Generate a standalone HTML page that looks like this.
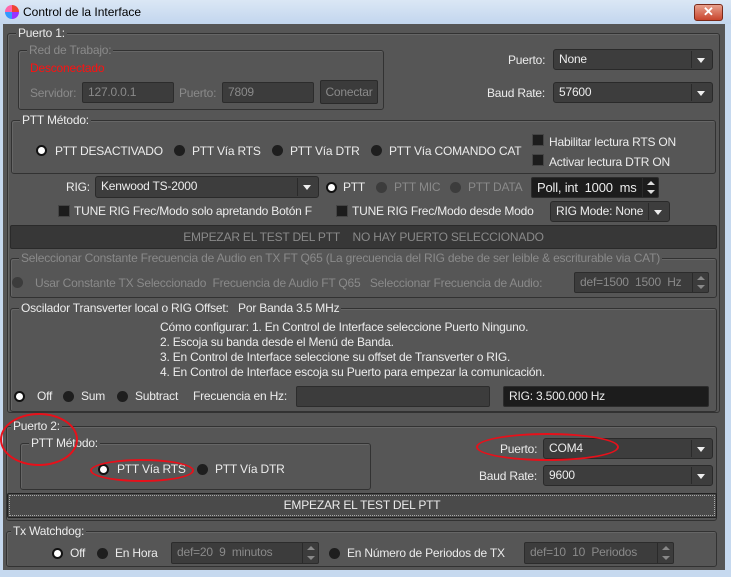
<!DOCTYPE html>
<html><head><meta charset="utf-8"><style>
*{box-sizing:border-box;margin:0;padding:0}
body{width:731px;height:577px;overflow:hidden;background:#c6d9ef;font-family:"Liberation Sans",Arial,sans-serif;font-size:12px;color:#ececec;position:relative;letter-spacing:-0.2px}
.a{position:absolute;white-space:nowrap}
.win{position:absolute;left:3px;top:24px;width:722px;height:546px;background:#565656}
.title{position:absolute;left:0;top:0;width:731px;height:24px;background:linear-gradient(#dbe7f5,#c3d6ee);color:#000;font-size:12px;letter-spacing:0}
.grp{position:absolute;border:1px solid #323232;border-radius:3px;box-shadow:inset 1px 1px 0 #666}
.lbl{position:absolute;top:-8px;left:8px;background:#565656;padding:0 2px;line-height:14px}
.dis{color:#8a8a8a}
.in{position:absolute;background:#3c3c3c;border:1px solid #2c2c2c;border-radius:2px;padding-left:5px;line-height:19px;color:#ececec}
.cb{position:absolute;background:#3d3d3d;border:1px solid #2a2a2a;border-radius:3px;padding-left:5px;line-height:19px}
.cb:after{content:"";position:absolute;right:7px;top:8px;border:4px solid transparent;border-top:5px solid #eee;border-bottom:0}
.cb:before{content:"";position:absolute;right:20px;top:1px;bottom:1px;border-left:1px solid #2a2a2a}
.r{position:absolute;width:11px;height:11px;border-radius:50%;background:#1e1e1e}
.r.on{background:#fff;border:2.5px solid #111}
.r.d{background:#3c3c3c}
.ck{position:absolute;width:12px;height:12px;background:#1c1c1c;border:1px solid #444}
.btn{position:absolute;background:#3b3b3b;border:1px solid #2a2a2a;border-radius:2px;text-align:center}
.sp{position:absolute;border-left:1px solid #2a2a2a;right:0;top:0;bottom:0;width:16px}
.sp:before{content:"";position:absolute;left:4px;top:3px;border:4px solid transparent;border-bottom:4px solid #888;border-top:0}
.sp:after{content:"";position:absolute;left:4px;bottom:3px;border:4px solid transparent;border-top:4px solid #888;border-bottom:0}
.sp.w:before{border-bottom-color:#ddd}.sp.w:after{border-top-color:#ddd}
.ell{position:absolute;border:2px solid #e8101a;border-radius:50%}
</style></head><body>
<div class="title">
<div class="a" style="left:5px;top:5px;width:14px;height:14px;border-radius:50%;background:conic-gradient(#e43 0 25%,#93f 0 50%,#39f 0 75%,#f6a 0)"></div>
<div class="a" style="left:23px;top:5px">Control de la Interface</div>
<div class="a" style="left:694px;top:4px;width:29px;height:17px;background:linear-gradient(#e8a08c,#c8452d);border:1px solid #7a2a1a;border-radius:3px;color:#fff;font-weight:bold;text-align:center;line-height:14px;font-size:13px">✕</div>
</div>
<div class="win"></div>

<div class="grp" style="left:7px;top:33px;width:713px;height:380px"><div class="lbl">Puerto 1:</div></div>
<div class="grp" style="left:18px;top:50px;width:366px;height:60px"><div class="lbl dis">Red de Trabajo:</div></div>
<div class="a" style="left:30px;top:61px;color:#ff1010">Desconectado</div>
<div class="a dis" style="left:30px;top:86px">Servidor:</div>
<div class="in dis" style="left:82px;top:82px;width:92px;height:21px;color:#8a8a8a">127.0.0.1</div>
<div class="a dis" style="left:179px;top:86px">Puerto:</div>
<div class="in" style="left:222px;top:82px;width:92px;height:21px;color:#8a8a8a">7809</div>
<div class="btn dis" style="left:320px;top:80px;width:58px;height:24px;line-height:22px">Conectar</div>

<div class="a" style="left:508px;top:53px">Puerto:</div>
<div class="cb" style="left:553px;top:49px;width:160px;height:21px">None</div>
<div class="a" style="left:487px;top:86px">Baud Rate:</div>
<div class="cb" style="left:553px;top:82px;width:160px;height:21px">57600</div>

<div class="grp" style="left:11px;top:120px;width:705px;height:54px"><div class="lbl">PTT Método:</div></div>
<div class="r on" style="left:36px;top:145px"></div><div class="a" style="left:55px;top:144px">PTT DESACTIVADO</div>
<div class="r" style="left:174px;top:145px"></div><div class="a" style="left:192px;top:144px">PTT Vía RTS</div>
<div class="r" style="left:272px;top:145px"></div><div class="a" style="left:290px;top:144px">PTT Vía DTR</div>
<div class="r" style="left:371px;top:145px"></div><div class="a" style="left:389px;top:144px">PTT Vía COMANDO CAT</div>
<div class="ck" style="left:532px;top:134px"></div><div class="a" style="left:549px;top:135px">Habilitar lectura RTS ON</div>
<div class="ck" style="left:532px;top:154px"></div><div class="a" style="left:549px;top:155px">Activar lectura DTR ON</div>

<div class="a" style="left:66px;top:180px">RIG:</div>
<div class="cb" style="left:95px;top:176px;width:224px;height:22px">Kenwood TS-2000</div>
<div class="r on" style="left:326px;top:182px"></div><div class="a" style="left:343px;top:180px">PTT</div>
<div class="r d" style="left:376px;top:182px"></div><div class="a dis" style="left:394px;top:180px">PTT MIC</div>
<div class="r d" style="left:450px;top:182px"></div><div class="a dis" style="left:468px;top:180px">PTT DATA</div>
<div class="in" style="left:531px;top:177px;width:128px;height:21px;background:#1c1c1c;font-size:13px">Poll, int&nbsp; 1000&nbsp; ms<div class="sp w"></div></div>

<div class="ck" style="left:58px;top:205px"></div><div class="a" style="left:74px;top:204px">TUNE RIG Frec/Modo solo apretando Botón F</div>
<div class="ck" style="left:336px;top:205px"></div><div class="a" style="left:352px;top:204px">TUNE RIG Frec/Modo desde Modo</div>
<div class="cb" style="left:550px;top:201px;width:120px;height:21px">RIG Mode: None</div>

<div class="btn" style="left:10px;top:225px;width:707px;height:24px;line-height:23px;color:#8a8a8a;background:#373737">EMPEZAR EL TEST DEL PTT&nbsp;&nbsp;&nbsp; NO HAY PUERTO SELECCIONADO</div>

<div class="grp" style="left:10px;top:258px;width:707px;height:40px"><div class="lbl dis">Seleccionar Constante Frecuencia de Audio en TX FT Q65 (La grecuencia del RIG debe de ser leible &amp; escriturable via CAT)</div></div>
<div class="r d" style="left:12px;top:277px"></div><div class="a dis" style="left:35px;top:276px">Usar Constante TX Seleccionado&nbsp; Frecuencia de Audio FT Q65&nbsp;&nbsp; Seleccionar Frecuencia de Audio:</div>
<div class="in" style="left:574px;top:272px;width:135px;height:21px;color:#8a8a8a">def=1500&nbsp; 1500&nbsp; Hz<div class="sp"></div></div>

<div class="grp" style="left:10px;top:308px;width:707px;height:104px"><div class="lbl">Oscilador Transverter local o RIG Offset:&nbsp;&nbsp; Por Banda 3.5 MHz</div></div>
<div class="a" style="left:160px;top:320px;line-height:15px">Cómo configurar: 1. En Control de Interface seleccione Puerto Ninguno.<br>2. Escoja su banda desde el Menú de Banda.<br>3. En Control de Interface seleccione su offset de Transverter o RIG.<br>4. En Control de Interface escoja su Puerto para empezar la comunicación.</div>
<div class="r on" style="left:14px;top:391px"></div><div class="a" style="left:37px;top:389px">Off</div>
<div class="r" style="left:63px;top:391px"></div><div class="a" style="left:81px;top:389px">Sum</div>
<div class="r" style="left:117px;top:391px"></div><div class="a" style="left:135px;top:389px">Subtract</div>
<div class="a" style="left:193px;top:389px">Frecuencia en Hz:</div>
<div class="in" style="left:296px;top:386px;width:194px;height:21px"></div>
<div class="in" style="left:503px;top:386px;width:206px;height:21px;background:#1c1c1c">RIG: 3.500.000 Hz</div>

<div class="grp" style="left:6px;top:426px;width:711px;height:95px"><div class="lbl" style="left:4px">Puerto 2:</div></div>
<div class="grp" style="left:20px;top:443px;width:351px;height:47px"><div class="lbl">PTT Método:</div></div>
<div class="r on" style="left:98px;top:464px"></div><div class="a" style="left:117px;top:462px">PTT Vía RTS</div>
<div class="r" style="left:197px;top:464px"></div><div class="a" style="left:215px;top:462px">PTT Vía DTR</div>
<div class="a" style="left:500px;top:442px">Puerto:</div>
<div class="cb" style="left:543px;top:438px;width:170px;height:21px">COM4</div>
<div class="a" style="left:479px;top:469px">Baud Rate:</div>
<div class="cb" style="left:543px;top:465px;width:170px;height:21px">9600</div>
<div class="btn" style="left:7px;top:493px;width:710px;height:25px;line-height:23px;background:#4a4a4a;border-color:#222;outline:1px dotted #aaa;outline-offset:-3px">EMPEZAR EL TEST DEL PTT</div>

<div class="grp" style="left:6px;top:531px;width:711px;height:36px"><div class="lbl" style="left:4px">Tx Watchdog:</div></div>
<div class="r on" style="left:52px;top:548px"></div><div class="a" style="left:70px;top:546px">Off</div>
<div class="r" style="left:97px;top:548px"></div><div class="a" style="left:115px;top:546px">En Hora</div>
<div class="in" style="left:171px;top:542px;width:148px;height:22px;color:#8a8a8a">def=20&nbsp; 9&nbsp; minutos<div class="sp"></div></div>
<div class="r" style="left:329px;top:548px"></div><div class="a" style="left:347px;top:546px">En Número de Periodos de TX</div>
<div class="in" style="left:524px;top:542px;width:150px;height:22px;color:#8a8a8a">def=10&nbsp; 10&nbsp; Periodos<div class="sp"></div></div>

<div class="ell" style="left:0px;top:413px;width:78px;height:53px"></div>
<div class="ell" style="left:90px;top:459px;width:104px;height:23px"></div>
<div class="ell" style="left:476px;top:433px;width:143px;height:28px"></div>
</body></html>
